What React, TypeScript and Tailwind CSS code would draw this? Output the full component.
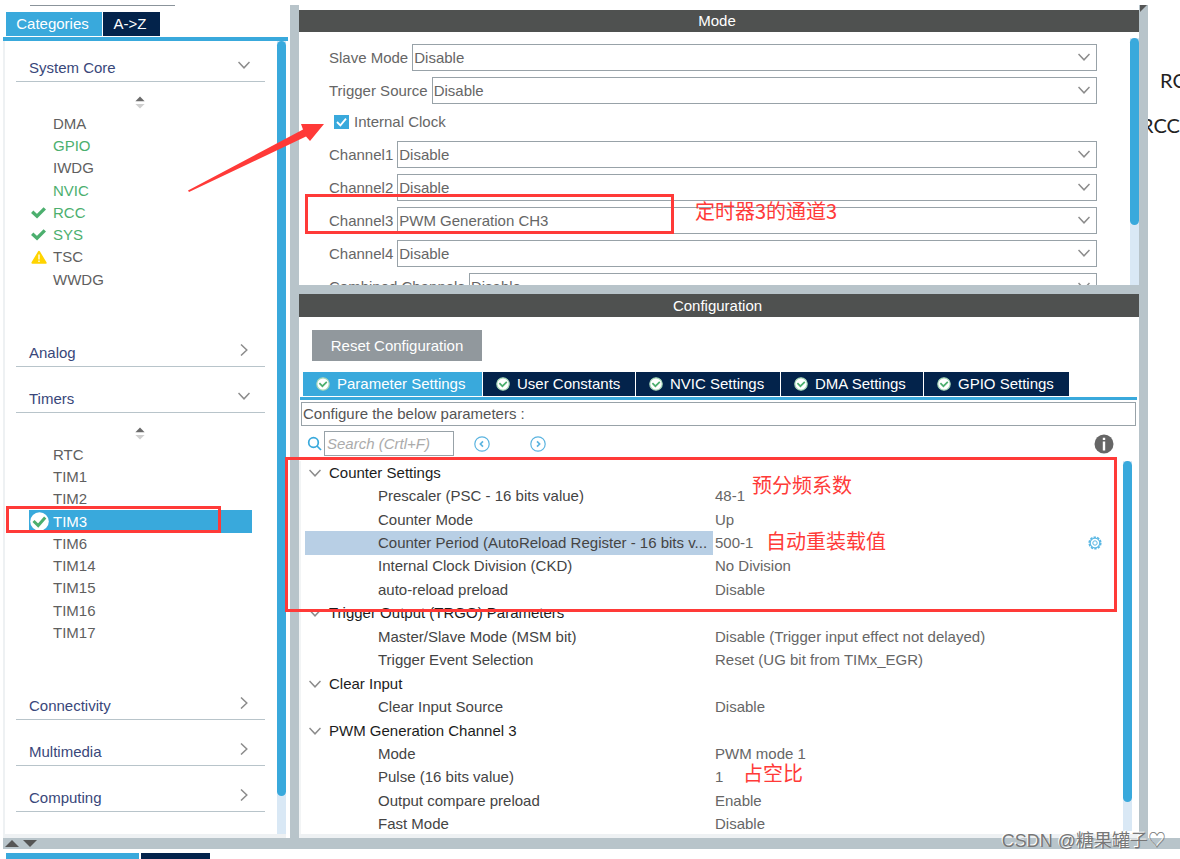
import React, { useState } from 'react';

interface Peripheral {
  name: string;
  status?: 'used' | 'ok' | 'warn' | 'selected';
}

interface Category {
  title: string;
  items?: Peripheral[];
}

interface ParamGroup {
  title: string;
  params: { name: string; value: string; active?: boolean }[];
}

const CATEGORIES: Category[] = [
  {
    title: 'System Core',
    items: [
      { name: 'DMA' },
      { name: 'GPIO', status: 'used' },
      { name: 'IWDG' },
      { name: 'NVIC', status: 'used' },
      { name: 'RCC', status: 'ok' },
      { name: 'SYS', status: 'ok' },
      { name: 'TSC', status: 'warn' },
      { name: 'WWDG' },
    ],
  },
  { title: 'Analog' },
  {
    title: 'Timers',
    items: [
      { name: 'RTC' },
      { name: 'TIM1' },
      { name: 'TIM2' },
      { name: 'TIM3', status: 'selected' },
      { name: 'TIM6' },
      { name: 'TIM14' },
      { name: 'TIM15' },
      { name: 'TIM16' },
      { name: 'TIM17' },
    ],
  },
  { title: 'Connectivity' },
  { title: 'Multimedia' },
  { title: 'Computing' },
];

const CHANNELS = [
  { label: 'Channel1', value: 'Disable' },
  { label: 'Channel2', value: 'Disable' },
  { label: 'Channel3', value: 'PWM Generation CH3' },
  { label: 'Channel4', value: 'Disable' },
  { label: 'Combined Channels', value: 'Disable' },
];

const CONFIG_TABS = [
  { label: 'Parameter Settings', width: 'w-[179px]' },
  { label: 'User Constants', width: 'w-[152px]' },
  { label: 'NVIC Settings', width: 'w-[144px]' },
  { label: 'DMA Settings', width: 'w-[142px]' },
  { label: 'GPIO Settings', width: 'w-[145px]' },
];

const PARAM_GROUPS: ParamGroup[] = [
  {
    title: 'Counter Settings',
    params: [
      { name: 'Prescaler (PSC - 16 bits value)', value: '48-1' },
      { name: 'Counter Mode', value: 'Up' },
      { name: 'Counter Period (AutoReload Register - 16 bits v...', value: '500-1', active: true },
      { name: 'Internal Clock Division (CKD)', value: 'No Division' },
      { name: 'auto-reload preload', value: 'Disable' },
    ],
  },
  {
    title: 'Trigger Output (TRGO) Parameters',
    params: [
      { name: 'Master/Slave Mode (MSM bit)', value: 'Disable (Trigger input effect not delayed)' },
      { name: 'Trigger Event Selection', value: 'Reset (UG bit from TIMx_EGR)' },
    ],
  },
  {
    title: 'Clear Input',
    params: [{ name: 'Clear Input Source', value: 'Disable' }],
  },
  {
    title: 'PWM Generation Channel 3',
    params: [
      { name: 'Mode', value: 'PWM mode 1' },
      { name: 'Pulse (16 bits value)', value: '1' },
      { name: 'Output compare preload', value: 'Enable' },
      { name: 'Fast Mode', value: 'Disable' },
    ],
  },
];

const Chevron: React.FC<{ right?: boolean; className?: string }> = ({ right, className }) => (
  <svg viewBox="0 0 12 12" className={`w-3 h-3 shrink-0 ${className || ''}`} fill="none" stroke="#8c8c8c" strokeWidth="1.5">
    <path d={right ? 'M3 0.5 L8.8 6 L3 11.5' : 'M0.5 3 L6 8.8 L11.5 3'} />
  </svg>
);

const SortIcon = () => (
  <svg viewBox="0 0 10 13" className="mr-[2px] w-[10px] h-[13px]">
    <path d="M5 0.5 L9.6 5.2 H0.4 Z" fill="#6b6b6b" />
    <path d="M0.4 8 H9.6 L5 12.6 Z" fill="#cfcfcf" />
  </svg>
);

const StatusIcon: React.FC<{ status?: Peripheral['status'] }> = ({ status }) => {
  if (status === 'ok') {
    return (
      <svg viewBox="0 0 15 12" className="ml-px w-[15px] h-[12px]" fill="none" stroke="#4caf6e" strokeWidth="3.4">
        <path d="M1.2 4.8 L6 9.2 L13.8 1.4" />
      </svg>
    );
  }
  if (status === 'warn') {
    return (
      <svg viewBox="0 0 16 14" className="ml-px w-[16px] h-[14px]">
        <path d="M8 1.8 L14.6 12.8 H1.4 Z" fill="#ffd400" stroke="#ffd400" strokeWidth="2" strokeLinejoin="round" />
        <path d="M8 4.5 V9.4 M8 10.6 V12" stroke="#fff" strokeWidth="1.3" />
      </svg>
    );
  }
  if (status === 'selected') {
    return (
      <svg viewBox="0 0 19 19" className="w-[19px] h-[19px]" fill="none">
        <circle cx="9.5" cy="9.5" r="9.3" fill="#fff" />
        <path d="M3.5 9 L8.2 13.6 L15.2 5.6" stroke="#4caf6e" strokeWidth="3" />
      </svg>
    );
  }
  return null;
};

const TabCheck = () => (
  <svg viewBox="0 0 14 14" className="w-[14px] h-[14px] shrink-0" fill="none">
    <circle cx="7" cy="7" r="6.2" fill="#fff" stroke="#a5d8b8" strokeWidth="1.2" />
    <path d="M3.4 6.2 L6.4 9.2 L10.8 4.8" stroke="#4caf6e" strokeWidth="1.7" />
  </svg>
);

const NavIcon: React.FC<{ d: string }> = ({ d }) => (
  <svg viewBox="0 0 16 16" className="w-[16px] h-[16px]" fill="none" stroke="#5bb4e0">
    <circle cx="8" cy="8" r="7.2" strokeWidth="1.2" />
    <path d={d} strokeWidth="1.7" />
  </svg>
);

const SelectRow: React.FC<{ label: string; value: string }> = ({ label, value }) => {
  const id = label.replace(/\s/g, '-').toLowerCase();
  return (
    <div className="flex h-[27px] shrink-0 items-center gap-1">
      <label htmlFor={id} className="whitespace-nowrap">{label}</label>
      <div className="relative h-full flex-1">
        <select
          id={id}
          defaultValue={value}
          className="h-full w-full appearance-none border border-[#98a2a8] bg-white pl-px leading-5 outline-none"
        >
          <option>{value}</option>
        </select>
        <Chevron className="pointer-events-none absolute right-[7px] top-[7px]" />
      </div>
    </div>
  );
};

const Sidebar = () => {
  const [tab, setTab] = useState('Categories');
  return (
    <aside className="flex w-[287px] shrink-0 flex-col">
      <div className="ml-[27px] h-px w-[145px] bg-[#8b949b]"></div>
      <div className="flex h-[31px] items-end gap-px border-b border-white pl-[3px]">
        {['Categories', 'A->Z'].map((name) => (
          <button
            key={name}
            onClick={() => setTab(name)}
            className={`h-6 pr-[3px] text-center text-white ${name === tab ? 'w-[96px] bg-[#39a9dc]' : 'w-[57px] bg-[#03234b]'}`}
          >
            {name}
          </button>
        ))}
      </div>
      <div className="mr-[2px] h-1 bg-[#39a9dc]"></div>

      <div className="mr-1 flex flex-1 border-b-4 border-l-2 border-[#eef1f3]">
        <nav className="flex-1 pl-[11px] pr-3 pt-[9px]">
          {CATEGORIES.map((cat) => (
            <section key={cat.title} className="mb-[14px]">
              <button className="flex h-8 w-full items-center justify-between border-b border-[#b8c4ca] pl-[13px] pr-[15px] pt-1 text-left text-[#39477a]">
                <span>{cat.title}</span>
                <Chevron right={!cat.items} className="mb-[5px]" />
              </button>
              {cat.items && (
                <div className="pb-[30px]">
                  <div className="flex h-[31px] items-end justify-center pb-1">
                    <SortIcon />
                  </div>
                  <ul className="ml-[13px] mr-[13px]">
                    {cat.items.map((item, i) => (
                      <li
                        key={item.name}
                        className={`flex items-center ${i % 4 === 3 ? 'h-[23px]' : 'h-[22px]'} ${
                          item.status === 'selected'
                            ? 'bg-[#39a9dc] text-white'
                            : item.status === 'used' || item.status === 'ok'
                              ? 'text-[#4caf6e]'
                              : 'text-[#5f5f5f]'
                        }`}
                      >
                        <span className="flex w-6 items-center pl-[1px]">
                          <StatusIcon status={item.status} />
                        </span>
                        {item.name}
                      </li>
                    ))}
                  </ul>
                </div>
              )}
            </section>
          ))}
        </nav>
        <div className="w-[9px] bg-[#d9e8f5]">
          <div className="h-[755px] rounded-full bg-[#39a9dc]"></div>
        </div>
      </div>
    </aside>
  );
};

const ModePanel = () => (
  <section className="flex h-[280px] shrink-0 flex-col overflow-hidden pt-1">
    <h2 className="mt-px h-[22px] bg-[#4f5150] pr-1 text-center leading-[22px] text-white">Mode</h2>
    <div className="flex min-h-0 flex-1 text-[#666]">
      <div className="flex flex-1 flex-col gap-[6px] overflow-hidden pl-[30px] pr-[33px] pt-3">
        <SelectRow label="Slave Mode" value="Disable" />
        <SelectRow label="Trigger Source" value="Disable" />
        <label className="flex h-[25px] shrink-0 items-center gap-[5px] pb-px pl-[5px]">
          <span className="relative flex h-[14px] w-[15px]">
            <input type="checkbox" defaultChecked className="h-full w-full appearance-none bg-[#39a9dc]" />
            <svg viewBox="0 0 15 14" className="pointer-events-none absolute inset-0" fill="none" stroke="#fff" strokeWidth="1.8">
              <path d="M3 7 L6.4 10.4 L12 3.6" />
            </svg>
          </span>
          Internal Clock
        </label>
        {CHANNELS.map((c) => (
          <SelectRow key={c.label} label={c.label} value={c.value} />
        ))}
      </div>
      <div className="mt-[6px] w-[9px] bg-[#d9e8f5]">
        <div className="h-[187px] rounded-full bg-[#39a9dc]"></div>
      </div>
    </div>
  </section>
);

const ParamTable = () => (
  <table className="h-[375px] w-full table-fixed border-collapse">
    <colgroup>
      <col className="w-[408px]" />
      <col />
      <col className="w-14" />
    </colgroup>
    <tbody>
      {PARAM_GROUPS.map((group) => (
        <React.Fragment key={group.title}>
          <tr>
            <td colSpan={3} className="p-0 leading-5 text-[#1c1c1c]">
              <button className="flex items-center gap-2 pl-1">
                <Chevron />
                {group.title}
              </button>
            </td>
          </tr>
          {group.params.map((p) => (
            <tr key={p.name}>
              <td className={`whitespace-nowrap p-0 pl-[73px] leading-5 text-[#444] ${p.active ? 'bg-[#b8cfe5]' : ''}`}>{p.name}</td>
              <td className="p-0 pl-[2px] leading-5 text-[#666]">{p.value}</td>
              <td className="p-0">
                {p.active && (
                  <svg viewBox="0 0 14 14" className="mx-auto h-[14px] w-[14px]" fill="none" stroke="#5bb8e4">
                    <circle cx="7" cy="7" r="5.8" strokeWidth="1.6" strokeDasharray="2.4 1.2" />
                    <circle cx="7" cy="7" r="4.8" strokeWidth="1.2" />
                    <circle cx="7" cy="7" r="2.2" strokeWidth="1" />
                  </svg>
                )}
              </td>
            </tr>
          ))}
        </React.Fragment>
      ))}
    </tbody>
  </table>
);

const ConfigPanel = () => {
  const [tab, setTab] = useState('Parameter Settings');
  return (
    <section className="flex min-h-0 flex-1 flex-col overflow-hidden border-b-4 border-[#eef1f3]">
      <h2 className="h-[23px] shrink-0 bg-[#4f5150] pr-[3px] text-center leading-[23px] text-white">Configuration</h2>
      <div className="pl-[13px] pt-[13px]">
        <button className="h-[31px] w-[170px] bg-[#91989d] text-white">Reset Configuration</button>
      </div>
      <div className="mt-[11px] flex gap-px pb-px pl-1">
        {CONFIG_TABS.map((t) => (
          <button
            key={t.label}
            onClick={() => setTab(t.label)}
            className={`flex h-6 items-center gap-[7px] whitespace-nowrap pl-[13px] text-white ${t.width} ${
              t.label === tab ? 'bg-[#39a9dc]' : 'bg-[#03234b]'
            }`}
          >
            <TabCheck />
            {t.label}
          </button>
        ))}
      </div>
      <div className="ml-px mr-[2px] h-[3px] shrink-0 bg-[#39a9dc]"></div>
      <div className="ml-[2px] mr-[3px] mt-[2px] h-6 shrink-0 border border-[#98a2a8] pl-px leading-[22px] text-[#555]">
        Configure the below parameters :
      </div>

      <div className="flex h-[35px] shrink-0 items-center pl-2 pr-[25px]">
        <svg viewBox="0 0 15 15" className="h-[15px] w-[15px]" fill="none" stroke="#39a9dc" strokeWidth="1.7">
          <circle cx="6.5" cy="6.5" r="4.8" />
          <path d="M10 10 L14 14" />
        </svg>
        <input
          type="text"
          aria-label="Search"
          placeholder="Search (Crtl+F)"
          className="ml-[2px] h-[25px] w-[130px] border border-[#98a2a8] pl-[2px] italic outline-none placeholder:text-[#ababab]"
        />
        <button aria-label="Previous" className="ml-5"><NavIcon d="M9 5.4 L6.4 8 L9 10.6" /></button>
        <button aria-label="Next" className="ml-10"><NavIcon d="M7 5.4 L9.6 8 L7 10.6" /></button>
        <button aria-label="Info" className="ml-auto">
          <svg viewBox="0 0 20 20" className="h-[20px] w-[20px]">
            <circle cx="10" cy="10" r="9.5" fill="#666" />
            <path d="M8.8 3.8 H11.2 V6 H8.8 Z M8.8 7.6 H11.2 V16.4 H8.8 Z" fill="#fff" />
          </svg>
        </button>
      </div>

      <div className="flex min-h-0 flex-1 border-l-2 border-[#f2f4f5] pl-1 pr-[7px]">
        <div className="flex-1">
          <ParamTable />
        </div>
        <div className="mb-[3px] w-[9px] bg-[#d9e8f5]">
          <div className="h-[341px] rounded-full bg-[#39a9dc]"></div>
        </div>
      </div>
    </section>
  );
};

// Red tutorial marks drawn over the tool window
const Annotations = () => (
  <div className="pointer-events-none absolute inset-0 font-['Noto_Sans_CJK_SC',sans-serif] text-[20px] leading-6 text-[#ff3a38]">
    <div className="absolute left-[305px] top-[194px] h-[40px] w-[369px] border-3 border-[#ff3a38]"></div>
    <div className="absolute left-[285px] top-[457px] h-[155px] w-[832px] border-3 border-[#ff3a38]"></div>
    <div className="absolute left-[6px] top-[506px] h-[27px] w-[215px] border-3 border-[#ff3a38]"></div>
    <svg viewBox="0 0 140 72" className="absolute left-[186px] top-[122px] h-[72px] w-[140px]" fill="#ff3a38">
      <path d="M2 68.5 L117 7.5 L115 2 L138 2 L124 19 L120 14.5 L3 70 Z" />
    </svg>
    <span className="absolute left-[695px] top-[199px]">定时器3的通道3</span>
    <span className="absolute left-[752px] top-[473px]">预分频系数</span>
    <span className="absolute left-[766px] top-[529px]">自动重装载值</span>
    <span className="absolute left-[743px] top-[761px]">占空比</span>
  </div>
);

const App: React.FC = () => {
  return (
    <div className="relative flex h-screen flex-col overflow-hidden bg-white pt-[5px] font-['Liberation_Sans',Arial,sans-serif] text-[15px] leading-5">
      <div className="flex min-h-0 flex-1 pl-[3px]">
        <Sidebar />
        <div className="w-[9px] shrink-0 bg-[#b8c4ca]"></div>
        <main className="flex min-w-0 flex-1 flex-col">
          <ModePanel />
          <div className="h-[9px] shrink-0 bg-[#b8c4ca]"></div>
          <ConfigPanel />
        </main>
        <div className="w-[9px] shrink-0 bg-[#b8c4ca]">
          <svg viewBox="0 0 9 8" className="h-2 w-[9px]"><path d="M1 0 H8 L1 7 Z" fill="#555" /></svg>
        </div>
        <div className="flex w-8 shrink-0 flex-col gap-[21px] overflow-hidden pt-[63px] font-[Lato,sans-serif] text-[20px] leading-6 text-[#222]">
          <span className="ml-3">RCC</span>
          <span className="-ml-[7px]">RCC</span>
        </div>
      </div>
      <div className="ml-[3px] flex h-[11px] shrink-0 items-center gap-1 bg-[#b8c4ca] pl-[2px]">
        <svg viewBox="0 0 14 7" className="h-[7px] w-[14px]"><path d="M7 0 L14 7 H0 Z" fill="#555" /></svg>
        <svg viewBox="0 0 14 7" className="h-[7px] w-[14px]"><path d="M0 0 H14 L7 7 Z" fill="#555" /></svg>
      </div>
      <div className="mt-1 flex h-[6px] shrink-0 gap-[2px] pl-[6px]">
        <div className="w-[133px] bg-[#39a9dc]"></div>
        <div className="w-[69px] bg-[#03234b]"></div>
      </div>

      <Annotations />
      <div className="pointer-events-none absolute bottom-[6px] right-[14px] whitespace-nowrap font-['Liberation_Sans','Noto_Sans_CJK_SC',sans-serif] text-[18px] leading-6 text-[#777] [text-shadow:-1px_-1px_0_#fff]">
        CSDN @糖果罐子♡
      </div>
    </div>
  );
};

export default App;
